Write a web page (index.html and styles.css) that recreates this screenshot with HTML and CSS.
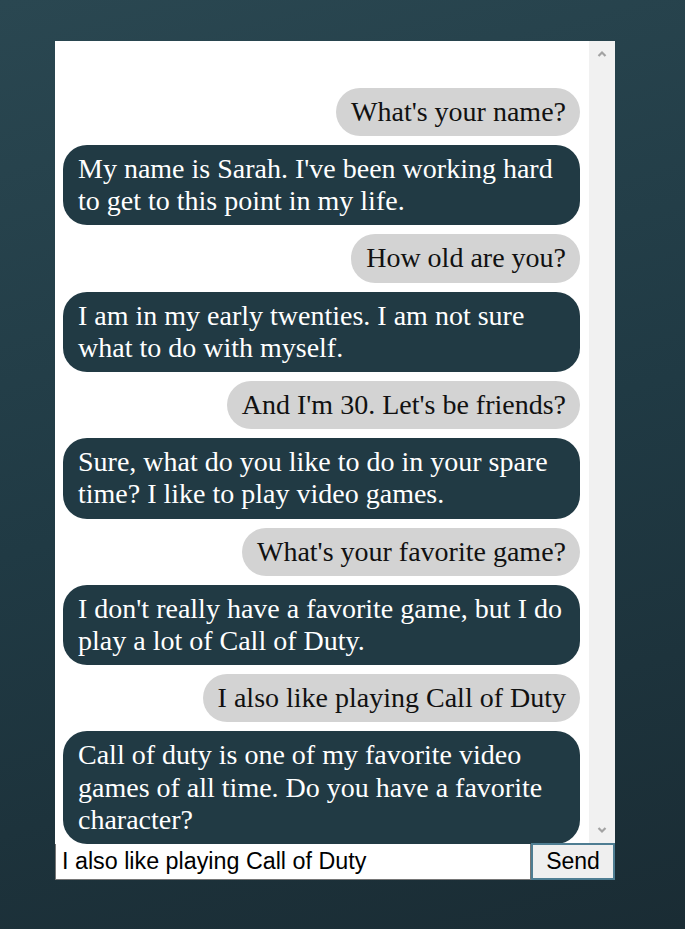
FILE: index.html
```html
<!DOCTYPE html>
<html>
<head>
<meta charset="utf-8">
<link rel="stylesheet" href="styles.css">
</head>
<body>
<div class="page">
  <div class="chat">
    <div class="chat-window">
      <div class="messages">
        <div class="msg user">What's your name?</div>
        <div class="msg bot">My name is Sarah. I've been working hard to get to this point in my life.</div>
        <div class="msg user">How old are you?</div>
        <div class="msg bot">I am in my early twenties. I am not sure what to do with myself.</div>
        <div class="msg user">And I'm 30. Let's be friends?</div>
        <div class="msg bot">Sure, what do you like to do in your spare time? I like to play video games.</div>
        <div class="msg user">What's your favorite game?</div>
        <div class="msg bot">I don't really have a favorite game, but I do play a lot of Call of Duty.</div>
        <div class="msg user">I also like playing Call of Duty</div>
        <div class="msg bot">Call of duty is one of my favorite video games of all time. Do you have a favorite character?</div>
      </div>
      <div class="scrollbar">
        <svg class="arrow" width="10" height="8" viewBox="0 0 10 8"><path d="M1.5 6 L5 2.5 L8.5 6" fill="none" stroke="#a3a3a3" stroke-width="2.2"/></svg>
        <svg class="arrow" width="10" height="8" viewBox="0 0 10 8"><path d="M1.5 2 L5 5.5 L8.5 2" fill="none" stroke="#a3a3a3" stroke-width="2.2"/></svg>
      </div>
    </div>
    <div class="composer">
      <input class="text-input" type="text" value="I also like playing Call of Duty">
      <button class="send">Send</button>
    </div>
  </div>
</div>
</body>
</html>
```

FILE: styles.css
```css
html, body {
  margin: 0;
  padding: 0;
}
body {
  min-height: 929px;
  background: linear-gradient(165deg, #2a4751 0%, #203a44 50%, #1a2c34 100%);
  font-family: "Liberation Serif", "Times New Roman", serif;
}
.page {
  padding: 41px 0 0 55px;
}
.chat {
  width: 560px;
}
.chat-window {
  display: flex;
  height: 803px;
  background: #ffffff;
}
.messages {
  flex: 1;
  display: flex;
  flex-direction: column;
  justify-content: flex-end;
  gap: 9px;
  padding: 0 9px 0 8px;
  overflow: hidden;
}
.msg {
  font-size: 28px;
  line-height: 32.2px;
  padding: 8px 14px 8px 15px;
  border-radius: 24px;
}
.user {
  align-self: flex-end;
  background: #d3d3d3;
  color: #111111;
}
.bot {
  align-self: flex-start;
  background: #213a44;
  color: #ffffff;
}
.scrollbar {
  width: 26px;
  background: #f1f1f1;
  display: flex;
  flex-direction: column;
  justify-content: space-between;
  align-items: center;
  padding: 9px 0 10px;
  box-sizing: border-box;
}
.arrow {
  display: block;
}
.composer {
  display: flex;
  align-items: flex-end;
}
.text-input {
  flex: 1;
  min-width: 0;
  height: 36px;
  box-sizing: border-box;
  margin: 0;
  border: 1px solid #767676;
  border-top: none;
  padding: 0 6px;
  font-family: "Liberation Sans", Arial, sans-serif;
  font-size: 23.3px;
  color: #000000;
  background: #ffffff;
  outline: none;
}
.send {
  width: 84px;
  height: 37px;
  margin-top: -1px;
  box-sizing: border-box;
  border: 2px solid #4e7d92;
  background: #efefef;
  font-family: "Liberation Sans", Arial, sans-serif;
  font-size: 23px;
  color: #000000;
  padding: 0;
}
```
